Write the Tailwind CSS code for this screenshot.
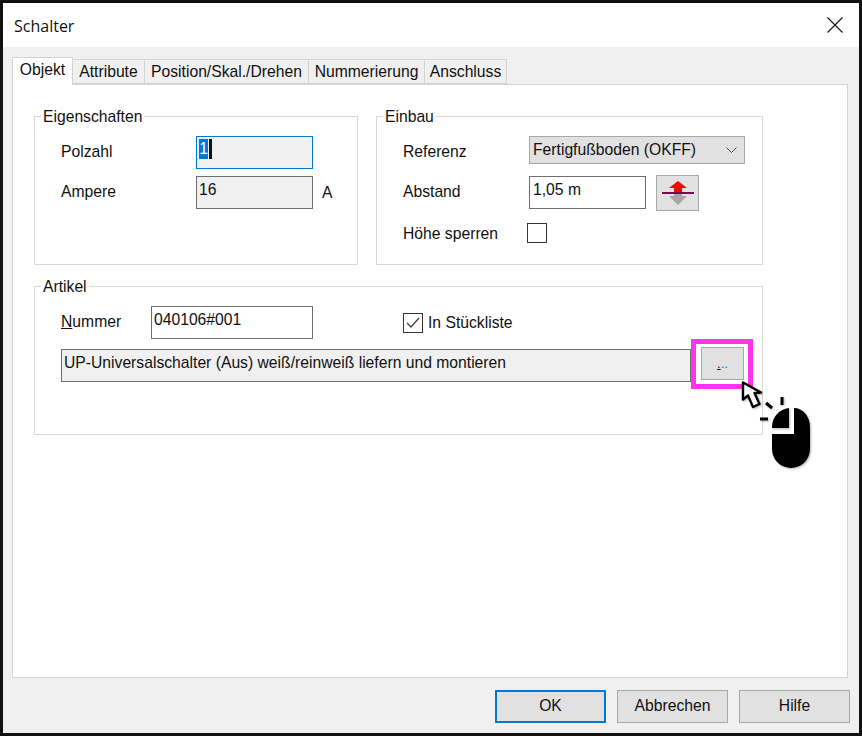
<!DOCTYPE html>
<html lang="de">
<head>
  <meta charset="UTF-8" />
  <title>Schalter</title>
  <script src="https://cdn.jsdelivr.net/npm/@tailwindcss/browser@4"></script>
</head>
<body class="bg-white font-['Liberation_Sans',Arial,sans-serif] text-[15.7px] text-[#111]">

  <div class="relative w-[862px] h-[736px] overflow-hidden flex flex-col border-[3px] border-[#111] bg-[#f0f0f0]">

    <!-- Titelleiste -->
    <header class="h-[44px] shrink-0 bg-white flex items-center justify-between pl-[11px] pr-[16px]">
      <span class="font-['Open_Sans',sans-serif] text-[16px] relative top-[1px]">Schalter</span>
      <svg width="16" height="16" viewBox="0 0 16 16" fill="none" stroke="#111" stroke-width="1.1"><path d="M.5.5l15 15M15.5.5l-15 15"/></svg>
    </header>

    <!-- Reiter -->
    <nav class="h-[37px] shrink-0 pl-[9px] pt-[10px] flex items-end relative z-10">
      <div class="h-[28px] w-[61px] -mb-[1px] bg-white border border-b-0 border-[#d4d4d4] flex items-center justify-center pb-[3px]">Objekt</div>
      <div class="h-[25px] w-[72px] border border-l-0 border-[#d4d4d4] flex items-center justify-center pt-[1px]">Attribute</div>
      <div class="h-[25px] w-[164px] border border-l-0 border-[#d4d4d4] flex items-center justify-center pt-[1px]">Position/Skal./Drehen</div>
      <div class="h-[25px] w-[116px] border border-l-0 border-[#d4d4d4] flex items-center justify-center pt-[1px]">Nummerierung</div>
      <div class="h-[25px] w-[82px] border border-l-0 border-[#d4d4d4] flex items-center justify-center pt-[1px]">Anschluss</div>
    </nav>

    <!-- Seite -->
    <main class="ml-[9px] w-[836px] h-[594px] shrink-0 bg-white border border-[#d4d4d4] pl-[21px] pt-[31px]">
      <div class="flex gap-[18px]">

        <section class="relative w-[324px] h-[149px] border border-[#d9d9d9] pl-[26px] pt-[19px]">
          <span class="absolute -top-[9px] left-[6px] bg-white px-[2px] leading-[18px]">Eigenschaften</span>
          <div class="flex flex-col gap-[7px]">
            <div class="flex items-center h-[33px]">
              <label class="w-[135px] relative -top-[1px]">Polzahl</label>
              <div class="w-[117px] h-[33px] bg-[#f0f0f0] border border-[#0078d7] pl-[2px] pt-[2px] flex items-start">
                <span class="bg-[#0078d7] text-white w-[9px] h-[20px] leading-[19px] text-center">1</span>
                <span class="ml-[1px] bg-[#111] w-[3px] h-[20px]"></span>
              </div>
            </div>
            <div class="flex items-center h-[33px]">
              <label class="w-[135px] relative -top-[1px]">Ampere</label>
              <div class="w-[117px] h-[33px] bg-[#f0f0f0] border border-[#6f6f6f] pl-[2px] pt-[3px] leading-[20px]">16</div>
              <span class="ml-[9px]">A</span>
            </div>
          </div>
        </section>

        <section class="relative w-[387px] h-[149px] border border-[#d9d9d9] pl-[26px] pt-[19px]">
          <span class="absolute -top-[9px] left-[6px] bg-white px-[2px] leading-[18px]">Einbau</span>
          <div class="flex items-start h-[33px]">
            <label class="w-[126px] leading-[33px] relative -top-[1px]">Referenz</label>
            <div class="w-[216px] h-[28px] bg-[#e1e1e1] border border-[#a8a8a8] pl-[3px] flex items-center justify-between pr-[7px]">
              <span>Fertigfußboden (OKFF)</span>
              <svg width="11" height="6" viewBox="0 0 11 6" fill="none" stroke="#444" stroke-width="1"><path d="M.5.5l5 5 5-5"/></svg>
            </div>
          </div>
          <div class="flex items-center h-[33px] mt-[7px]">
            <label class="w-[126px] relative -top-[1px]">Abstand</label>
            <div class="w-[117px] h-[33px] bg-white border border-[#6f6f6f] pl-[3px] pt-[3px] leading-[20px]">1,05 m</div>
            <button class="ml-[10px] w-[43px] h-[36px] bg-[#e1e1e1] border border-[#a8a8a8] flex items-center justify-center">
              <svg width="32" height="24" viewBox="0 0 32 24"><path d="M16 0l9 7h-5v4h-8V7H7z" fill="#ff0000"/><path d="M12 13h8v2h5l-9 9-9-9h5z" fill="#a6a6a6"/><path d="M0 12h32" stroke="#7a0a4a" stroke-width="2"/></svg>
            </button>
          </div>
          <div class="flex items-center h-[20px] mt-[14px]">
            <label class="w-[124px] relative top-[1px]">Höhe sperren</label>
            <span class="w-[20px] h-[20px] bg-white border border-[#333]"></span>
          </div>
        </section>
      </div>

      <section class="relative w-[729px] h-[149px] mt-[21px] border border-[#d9d9d9] pl-[26px] pt-[19px]">
        <span class="absolute -top-[9px] left-[6px] bg-white px-[2px] leading-[18px]">Artikel</span>
        <div class="flex items-center h-[33px]">
          <label class="w-[90px] relative -top-[1px]"><span class="underline">N</span>ummer</label>
          <div class="w-[162px] h-[33px] bg-white border border-[#6f6f6f] pl-[2px] pt-[3px] leading-[20px]">040106#001</div>
          <span class="ml-[90px] w-[20px] h-[20px] bg-white border border-[#333] flex items-center justify-center">
            <svg width="14" height="12" viewBox="0 0 14 12" fill="none" stroke="#444" stroke-width="1.3"><path d="M1 6l4 4 8-9"/></svg>
          </span>
          <span class="ml-[5px]">In Stückliste</span>
        </div>
        <div class="w-[630px] h-[33px] mt-[10px] bg-[#f0f0f0] border border-[#6f6f6f] pl-[2px] pt-[3px] leading-[20px]">UP-Universalschalter (Aus) weiß/reinweiß liefern und montieren</div>
        <button class="absolute left-[666px] top-[60px] w-[43px] h-[33px] bg-[#e1e1e1] border border-[#a8a8a8] flex items-start justify-center pt-[9px] text-[13px] leading-[14px] text-[#0078d7]">
          <span><span class="underline text-[#111]">.</span>..</span>
        </button>
      </section>
    </main>

    <!-- Schaltflächen -->
    <footer class="flex justify-end gap-[11px] pr-[9px] pt-[12px]">
      <button class="w-[111px] h-[33px] bg-[#e1e1e1] border-2 border-[#0078d7] pb-[1px]">OK</button>
      <button class="w-[111px] h-[33px] bg-[#e1e1e1] border border-[#a8a8a8] pb-[2px]">Abbrechen</button>
      <button class="w-[111px] h-[33px] bg-[#e1e1e1] border border-[#a8a8a8] pb-[2px]">Hilfe</button>
    </footer>

    <!-- Markierung und Maus -->
    <div class="absolute left-[688px] top-[336px] w-[62px] h-[50px] border-[5px] border-[#ff33ee]"></div>
    <svg class="absolute left-[732px] top-[372px] drop-shadow-[1px_1px_1px_rgba(0,0,0,0.3)]" width="80" height="100" viewBox="0 0 80 100">
      <path d="M8 7.500v17l5-4 5 11.500 6.500-3-5-11 6.500-.5z" fill="#fff" stroke="#000" stroke-width="2.400" stroke-linejoin="round"/>
      <path d="M31 28l6 5M47 22v8M25 44h8" stroke="#000" stroke-width="3"/>
      <path d="M54 33v20H37v-1a19 19 0 0 1 17-19z M59 33a16 19 0 0 1 16 19v22a19 19 0 0 1-38 0V59h22z" fill="#000"/>
    </svg>
  </div>

</body>
</html>
